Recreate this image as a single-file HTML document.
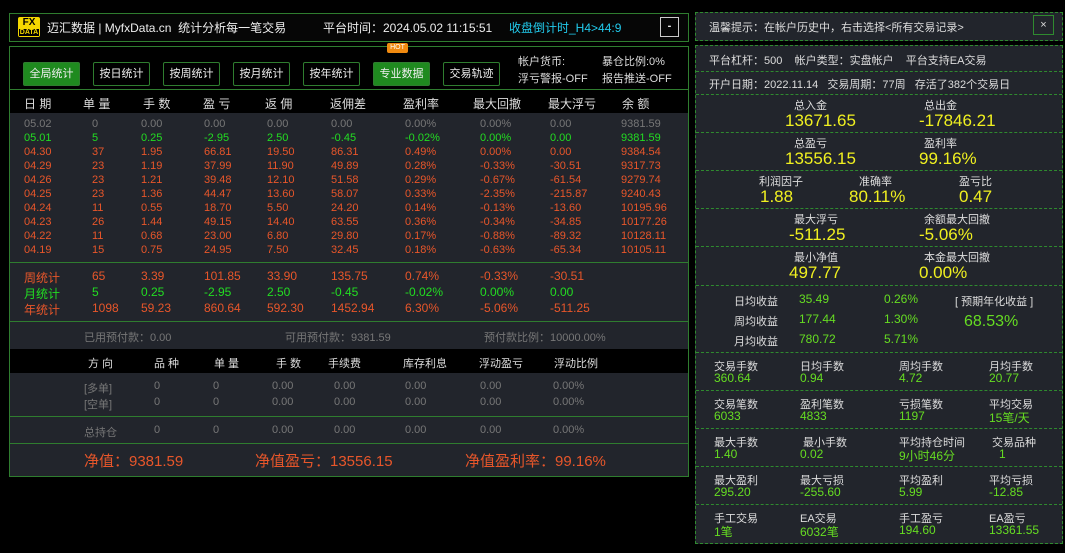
<!DOCTYPE html>
<html><head><meta charset="utf-8"><style>
*{margin:0;padding:0;box-sizing:border-box}
body{width:1065px;height:553px;background:#000;position:relative;overflow:hidden;font-family:"Liberation Sans","Noto Sans CJK SC",sans-serif;font-size:11px;color:#ddd}
.a{position:absolute;white-space:nowrap}
.box{position:absolute;border:1px solid #2f7d2f}
.gray{background:#22252c}
.btn{position:absolute;top:62px;width:57px;height:24px;border:1px solid #2f7d2f;color:#eee;font-size:11px;text-align:center;line-height:22px;border-radius:2px}
.btn.on{background:#1f8a1f}
.r{position:absolute;font-size:11px}
.o{color:#e8562a}.g{color:#22dd22}.gr{color:#777}.w{color:#ddd}
.dash{position:absolute;left:696px;width:366px;border-top:1px dashed #2f8a2f}
.y{color:#f0f020;font-size:17px}
.lg{color:#66dd22}
</style></head><body>
<!-- title bar -->
<div class="box" style="left:9px;top:13px;width:680px;height:29px;background:#060606"></div>
<div class="a" style="left:18px;top:17px;width:22px;height:20px;background:#f5d800;border-radius:2px;color:#000;font-weight:bold;font-size:10px;line-height:9px;text-align:center;padding-top:1px">FX<br><span style="font-size:7px;background:#000;color:#f5d800;padding:0 1px">DATA</span></div>
<div class="a" style="left:47px;top:19px;font-size:12px;color:#eee">迈汇数据 | MyfxData.cn &nbsp;统计分析每一笔交易</div>
<div class="a" style="left:323px;top:19px;font-size:12px;color:#eee">平台时间：2024.05.02 11:15:51</div>
<div class="a" style="left:509px;top:19px;font-size:12px;color:#22ccee">收盘倒计时_H4&gt;44:9</div>
<div class="a" style="left:660px;top:17px;width:19px;height:20px;border:1px solid #ccc;color:#eee;text-align:center;line-height:16px;font-weight:bold">-</div>

<!-- main panel -->
<div class="box" style="left:9px;top:46px;width:680px;height:431px;background:#000"></div>
<div class="btn on" style="left:23px">全局统计</div>
<div class="btn" style="left:93px">按日统计</div>
<div class="btn" style="left:163px">按周统计</div>
<div class="btn" style="left:233px">按月统计</div>
<div class="btn" style="left:303px">按年统计</div>
<div class="btn on" style="left:373px">专业数据</div>
<div class="btn" style="left:443px">交易轨迹</div>
<div class="a" style="left:387px;top:43px;width:21px;height:10px;background:#f08a10;color:#fff;font-size:7px;line-height:10px;text-align:center;border-radius:2px">HOT</div>
<div class="a" style="left:518px;top:53px;color:#ddd">帐户货币:</div>
<div class="a" style="left:602px;top:53px;color:#ddd">暴仓比例:0%</div>
<div class="a" style="left:518px;top:70px;color:#ddd">浮亏警报-OFF</div>
<div class="a" style="left:602px;top:70px;color:#ddd">报告推送-OFF</div>
<div class="a" style="left:10px;top:89px;width:678px;border-top:1px solid #2f7d2f"></div>
<div class="a" style="left:24px;top:95px;font-size:12px;color:#ddd">日 期</div>
<div class="a" style="left:83px;top:95px;font-size:12px;color:#ddd">单 量</div>
<div class="a" style="left:143px;top:95px;font-size:12px;color:#ddd">手 数</div>
<div class="a" style="left:203px;top:95px;font-size:12px;color:#ddd">盈 亏</div>
<div class="a" style="left:265px;top:95px;font-size:12px;color:#ddd">返 佣</div>
<div class="a" style="left:330px;top:95px;font-size:12px;color:#ddd">返佣差</div>
<div class="a" style="left:403px;top:95px;font-size:12px;color:#ddd">盈利率</div>
<div class="a" style="left:473px;top:95px;font-size:12px;color:#ddd">最大回撤</div>
<div class="a" style="left:548px;top:95px;font-size:12px;color:#ddd">最大浮亏</div>
<div class="a" style="left:622px;top:95px;font-size:12px;color:#ddd">余 额</div>

<div class="a gray" style="left:10px;top:113px;width:678px;height:149px"></div>
<div class="a" style="left:10px;top:262px;width:678px;border-top:1px solid #2f7d2f"></div>
<div class="a gray" style="left:10px;top:263px;width:678px;height:58px"></div>
<div class="a" style="left:10px;top:321px;width:678px;border-top:1px solid #2f7d2f"></div>
<div class="a gray" style="left:10px;top:322px;width:678px;height:27px"></div>
<div class="a gray" style="left:10px;top:373px;width:678px;height:43px"></div>
<div class="a" style="left:10px;top:416px;width:678px;border-top:1px solid #2f7d2f"></div>
<div class="a gray" style="left:10px;top:417px;width:678px;height:26px"></div>
<div class="a" style="left:10px;top:443px;width:678px;border-top:1px solid #2f7d2f"></div>
<div class="a gray" style="left:10px;top:444px;width:678px;height:32px"></div>

<div id="rows"></div>
<script>
var xs=[24,92,141,204,267,331,405,480,550,621];
var data=[
["gr","05.02","0","0.00","0.00","0.00","0.00","0.00%","0.00%","0.00","9381.59"],
["g","05.01","5","0.25","-2.95","2.50","-0.45","-0.02%","0.00%","0.00","9381.59"],
["o","04.30","37","1.95","66.81","19.50","86.31","0.49%","0.00%","0.00","9384.54"],
["o","04.29","23","1.19","37.99","11.90","49.89","0.28%","-0.33%","-30.51","9317.73"],
["o","04.26","23","1.21","39.48","12.10","51.58","0.29%","-0.67%","-61.54","9279.74"],
["o","04.25","23","1.36","44.47","13.60","58.07","0.33%","-2.35%","-215.87","9240.43"],
["o","04.24","11","0.55","18.70","5.50","24.20","0.14%","-0.13%","-13.60","10195.96"],
["o","04.23","26","1.44","49.15","14.40","63.55","0.36%","-0.34%","-34.85","10177.26"],
["o","04.22","11","0.68","23.00","6.80","29.80","0.17%","-0.88%","-89.32","10128.11"],
["o","04.19","15","0.75","24.95","7.50","32.45","0.18%","-0.63%","-65.34","10105.11"]];
var h="";
data.forEach(function(r,i){for(var j=1;j<r.length;j++)h+='<div class="r '+r[0]+'" style="left:'+xs[j-1]+'px;top:'+(118+i*14)+'px">'+r[j]+'</div>';});
var st=[["o","周统计","65","3.39","101.85","33.90","135.75","0.74%","-0.33%","-30.51"],
["g","月统计","5","0.25","-2.95","2.50","-0.45","-0.02%","0.00%","0.00"],
["o","年统计","1098","59.23","860.64","592.30","1452.94","6.30%","-5.06%","-511.25"]];
st.forEach(function(r,i){for(var j=1;j<r.length;j++)h+='<div class="r '+r[0]+'" style="left:'+xs[j-1]+'px;top:'+(269+i*16)+'px;font-size:12px">'+r[j]+'</div>';});
var px=[84,150,210,272,324,399,475,550];
var hd=["方 向","品 种","单 量","手 数","手续费","库存利息","浮动盈亏","浮动比例"];
hd.forEach(function(t,j){h+='<div class="r w" style="left:'+(px[j]+4)+'px;top:355px">'+t+'</div>';});
var vx=[84,153,213,272,319,373,430,490];
[["[多单]",380],["[空单]",396],["总持仓",424]].forEach(function(r){var v=[r[0],"0","0","0.00","0.00","0.00","0.00","0.00%"];v.forEach(function(t,j){h+='<div class="r gr" style="left:'+[84,154,213,272,334,405,480,553][j]+'px;top:'+r[1]+'px">'+t+'</div>';});});
document.getElementById("rows").innerHTML=h;
</script>
<div class="a gr" style="left:84px;top:329px">已用预付款：0.00</div>
<div class="a gr" style="left:285px;top:329px">可用预付款：9381.59</div>
<div class="a gr" style="left:484px;top:329px">预付款比例：10000.00%</div>
<div class="a o" style="left:84px;top:450px;font-size:15px">净值：9381.59</div>
<div class="a o" style="left:255px;top:450px;font-size:15px">净值盈亏：13556.15</div>
<div class="a o" style="left:465px;top:450px;font-size:15px">净值盈利率：99.16%</div>

<!-- right panel -->
<div class="a" style="left:695px;top:12px;width:368px;height:29px;border:1px dashed #2f8a2f;background:#22252c"></div>
<div class="a" style="left:709px;top:19px;color:#ddd">温馨提示：在帐户历史中，右击选择&lt;所有交易记录&gt;</div>
<div class="a" style="left:1033px;top:15px;width:21px;height:20px;border:1px solid #2f8a2f;color:#ddd;text-align:center;line-height:18px">×</div>
<div class="a" style="left:695px;top:45px;width:368px;height:499px;border:1px dashed #2f8a2f;background:#22252c"></div>
<div class="a" style="left:709px;top:52px;color:#ddd">平台杠杆：500 &nbsp;&nbsp;&nbsp;帐户类型：实盘帐户 &nbsp;&nbsp;&nbsp;平台支持EA交易</div>
<div class="a" style="left:709px;top:76px;color:#ddd">开户日期：2022.11.14 &nbsp;&nbsp;交易周期：77周 &nbsp;&nbsp;存活了382个交易日</div>
<div class="dash" style="top:71px"></div>
<div class="dash" style="top:94px"></div>
<div class="dash" style="top:132px"></div>
<div class="dash" style="top:170px"></div>
<div class="dash" style="top:208px"></div>
<div class="dash" style="top:246px"></div>
<div class="dash" style="top:285px"></div>
<div class="dash" style="top:352px"></div>
<div class="dash" style="top:390px"></div>
<div class="dash" style="top:428px"></div>
<div class="dash" style="top:466px"></div>
<div class="dash" style="top:504px"></div>

<div class="a" style="left:794px;top:97px">总入金</div><div class="a y" style="left:785px;top:111px">13671.65</div>
<div class="a" style="left:924px;top:97px">总出金</div><div class="a y" style="left:919px;top:111px">-17846.21</div>
<div class="a" style="left:794px;top:135px">总盈亏</div><div class="a y" style="left:785px;top:149px">13556.15</div>
<div class="a" style="left:924px;top:135px">盈利率</div><div class="a y" style="left:919px;top:149px">99.16%</div>
<div class="a" style="left:759px;top:173px">利润因子</div><div class="a y" style="left:760px;top:187px">1.88</div>
<div class="a" style="left:859px;top:173px">准确率</div><div class="a y" style="left:849px;top:187px">80.11%</div>
<div class="a" style="left:959px;top:173px">盈亏比</div><div class="a y" style="left:959px;top:187px">0.47</div>
<div class="a" style="left:794px;top:211px">最大浮亏</div><div class="a y" style="left:789px;top:225px">-511.25</div>
<div class="a" style="left:924px;top:211px">余额最大回撤</div><div class="a y" style="left:919px;top:225px">-5.06%</div>
<div class="a" style="left:794px;top:249px">最小净值</div><div class="a y" style="left:789px;top:263px">497.77</div>
<div class="a" style="left:924px;top:249px">本金最大回撤</div><div class="a y" style="left:919px;top:263px">0.00%</div>

<div class="a" style="left:734px;top:293px">日均收益</div><div class="a lg" style="left:799px;top:292px;font-size:12px">35.49</div><div class="a lg" style="left:884px;top:292px;font-size:12px">0.26%</div>
<div class="a" style="left:734px;top:313px">周均收益</div><div class="a lg" style="left:799px;top:312px;font-size:12px">177.44</div><div class="a lg" style="left:884px;top:312px;font-size:12px">1.30%</div>
<div class="a" style="left:734px;top:333px">月均收益</div><div class="a lg" style="left:799px;top:332px;font-size:12px">780.72</div><div class="a lg" style="left:884px;top:332px;font-size:12px">5.71%</div>
<div class="a" style="left:955px;top:293px">[ 预期年化收益 ]</div>
<div class="a lg" style="left:964px;top:313px;font-size:16px">68.53%</div>

<div id="grid"></div>
<script>
var g=[[["交易手数","360.64"],["日均手数","0.94"],["周均手数","4.72"],["月均手数","20.77"]],
[["交易笔数","6033"],["盈利笔数","4833"],["亏损笔数","1197"],["平均交易","15笔/天"]],
[["最大手数","1.40"],[" 最小手数","0.02"],["平均持仓时间","9小时46分"],["交易品种","&nbsp;&nbsp;&nbsp;1"]],
[["最大盈利","295.20"],["最大亏损","-255.60"],["平均盈利","5.99"],["平均亏损","-12.85"]],
[["手工交易","1笔"],["EA交易","6032笔"],["手工盈亏","194.60"],["EA盈亏","13361.55"]]];
var gx=[714,800,899,989],s="";
g.forEach(function(r,i){r.forEach(function(c,j){var x=gx[j]+(i==2&&j==1?3:0)+(i==2&&j==3?3:0);s+='<div class="a" style="left:'+x+'px;top:'+(358+i*38)+'px">'+c[0]+'</div><div class="a lg" style="left:'+gx[j]+'px;top:'+(371+i*38)+'px;font-size:12px">'+c[1]+'</div>';});});
document.getElementById("grid").innerHTML=s;
</script>
</body></html>
